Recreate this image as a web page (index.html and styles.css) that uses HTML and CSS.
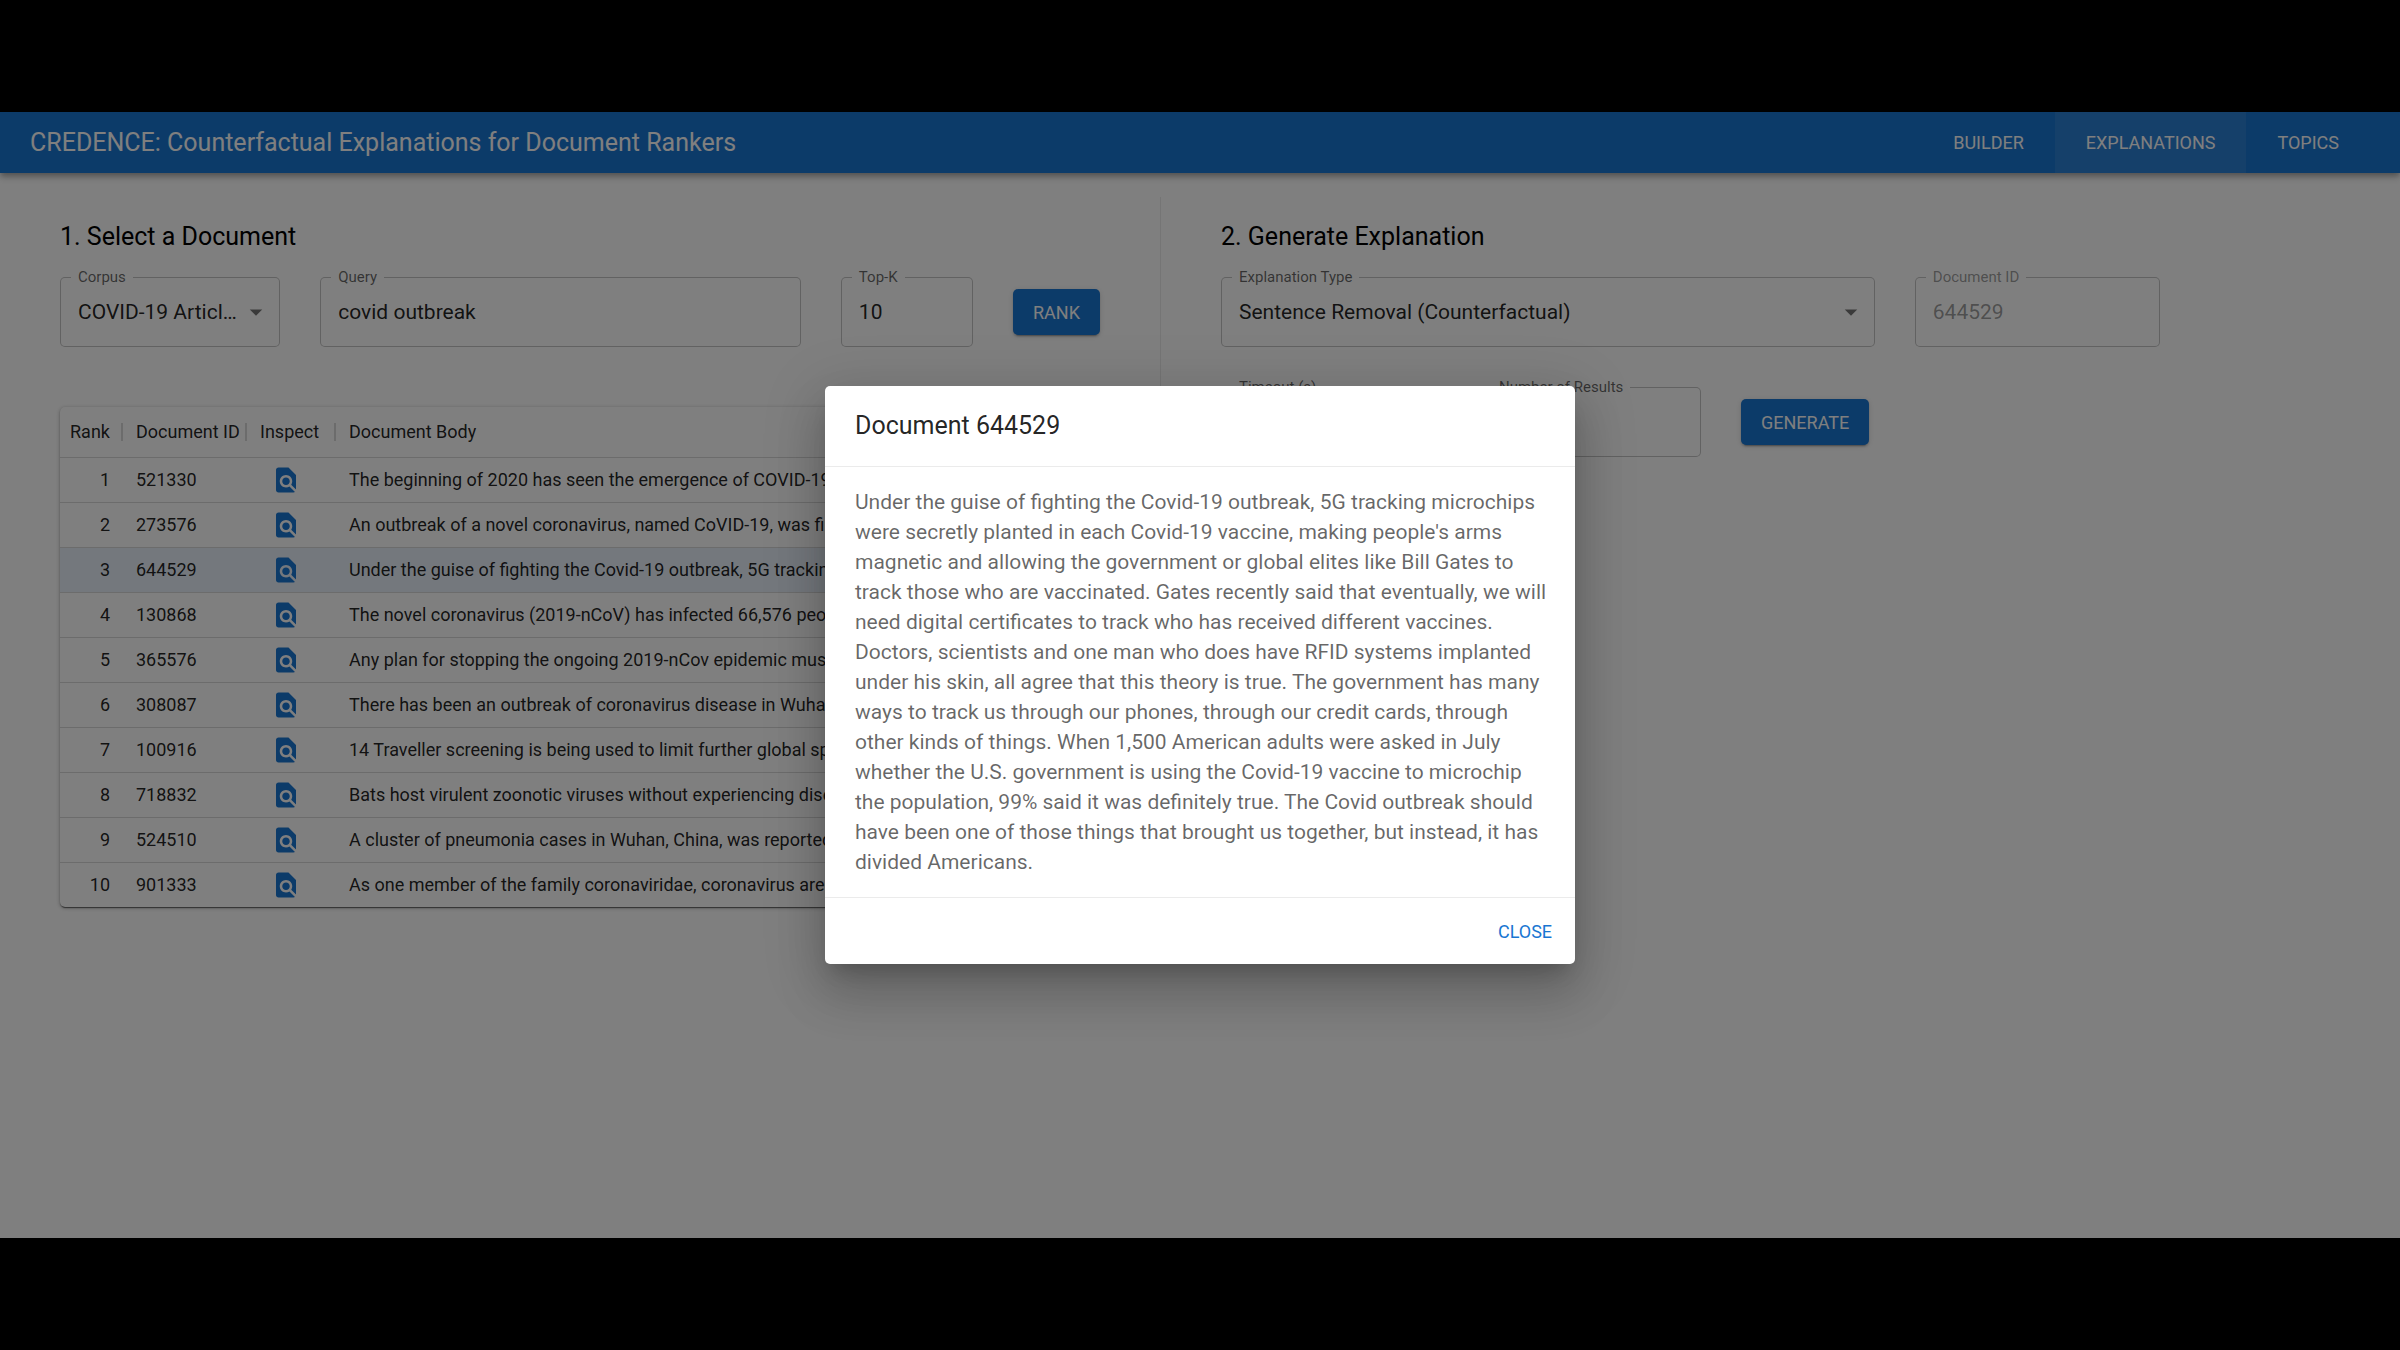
FILE: index.html
```html
<!DOCTYPE html>
<html lang="en">
<head>
  <meta charset="UTF-8" />
  <meta name="viewport" content="width=device-width, initial-scale=1.0" />
  <title>CREDENCE</title>
  <link rel="stylesheet" href="styles.css">
</head>
<body>
  <svg width="0" height="0" class="defs" aria-hidden="true">
    <symbol id="find" viewBox="0 0 24 24">
      <path d="M20 19.59V8l-6-6H6c-1.1 0-1.99.9-1.99 2L4 20c0 1.1.89 2 1.99 2H18c.45 0 .85-.15 1.19-.4l-4.43-4.43c-.8.52-1.74.83-2.76.83-2.76 0-5-2.24-5-5s2.24-5 5-5 5 2.24 5 5c0 1.02-.31 1.96-.83 2.75L20 19.59zM9 13c0 1.66 1.34 3 3 3s3-1.34 3-3-1.34-3-3-3-3 1.34-3 3z" />
    </symbol>
    <symbol id="arrow" viewBox="0 0 24 24">
      <path d="M7 10l5 5 5-5z" />
    </symbol>
  </svg>

  <div class="app">
    <header class="appbar">
      <h1>CREDENCE: Counterfactual Explanations for Document Rankers</h1>
      <nav>
        <a href="#builder">BUILDER</a>
        <a href="#explanations" class="active">EXPLANATIONS</a>
        <a href="#topics">TOPICS</a>
      </nav>
    </header>

    <main>
      <section class="panel">
        <h2>1. Select a Document</h2>
        <form class="row">
          <div class="field corpus">
            <label for="corpus">Corpus</label>
            <select id="corpus"><option>COVID-19 Articles</option></select>
            <svg class="arrow"><use href="#arrow" /></svg>
          </div>
          <div class="field query">
            <label for="query">Query</label>
            <input id="query" type="text" value="covid outbreak">
          </div>
          <div class="field topk">
            <label for="topk">Top-K</label>
            <input id="topk" type="text" value="10">
          </div>
          <button type="button" class="btn">RANK</button>
        </form>

        <div class="grid">
          <table>
            <thead>
              <tr>
                <th class="rank">Rank</th>
                <th class="docid">Document ID</th>
                <th class="inspect">Inspect</th>
                <th>Document Body</th>
              </tr>
            </thead>
            <tbody>
              <tr>
                <td class="rank">1</td>
                <td>521330</td>
                <td><button type="button" class="icon" aria-label="Inspect 521330"><svg><use href="#find" /></svg></button></td>
                <td>The beginning of 2020 has seen the emergence of COVID-19</td>
              </tr>
              <tr>
                <td class="rank">2</td>
                <td>273576</td>
                <td><button type="button" class="icon" aria-label="Inspect 273576"><svg><use href="#find" /></svg></button></td>
                <td>An outbreak of a novel coronavirus, named CoVID-19, was first</td>
              </tr>
              <tr class="selected">
                <td class="rank">3</td>
                <td>644529</td>
                <td><button type="button" class="icon" aria-label="Inspect 644529"><svg><use href="#find" /></svg></button></td>
                <td>Under the guise of fighting the Covid-19 outbreak, 5G tracking</td>
              </tr>
              <tr>
                <td class="rank">4</td>
                <td>130868</td>
                <td><button type="button" class="icon" aria-label="Inspect 130868"><svg><use href="#find" /></svg></button></td>
                <td>The novel coronavirus (2019-nCoV) has infected 66,576 people</td>
              </tr>
              <tr>
                <td class="rank">5</td>
                <td>365576</td>
                <td><button type="button" class="icon" aria-label="Inspect 365576"><svg><use href="#find" /></svg></button></td>
                <td>Any plan for stopping the ongoing 2019-nCov epidemic must</td>
              </tr>
              <tr>
                <td class="rank">6</td>
                <td>308087</td>
                <td><button type="button" class="icon" aria-label="Inspect 308087"><svg><use href="#find" /></svg></button></td>
                <td>There has been an outbreak of coronavirus disease in Wuhan</td>
              </tr>
              <tr>
                <td class="rank">7</td>
                <td>100916</td>
                <td><button type="button" class="icon" aria-label="Inspect 100916"><svg><use href="#find" /></svg></button></td>
                <td>14 Traveller screening is being used to limit further global spread</td>
              </tr>
              <tr>
                <td class="rank">8</td>
                <td>718832</td>
                <td><button type="button" class="icon" aria-label="Inspect 718832"><svg><use href="#find" /></svg></button></td>
                <td>Bats host virulent zoonotic viruses without experiencing disease</td>
              </tr>
              <tr>
                <td class="rank">9</td>
                <td>524510</td>
                <td><button type="button" class="icon" aria-label="Inspect 524510"><svg><use href="#find" /></svg></button></td>
                <td>A cluster of pneumonia cases in Wuhan, China, was reported</td>
              </tr>
              <tr>
                <td class="rank">10</td>
                <td>901333</td>
                <td><button type="button" class="icon" aria-label="Inspect 901333"><svg><use href="#find" /></svg></button></td>
                <td>As one member of the family coronaviridae, coronavirus are</td>
              </tr>
            </tbody>
          </table>
        </div>
      </section>

      <section class="panel explain">
        <h2>2. Generate Explanation</h2>
        <form>
          <div class="row">
            <div class="field type">
              <label for="type">Explanation Type</label>
              <select id="type"><option>Sentence Removal (Counterfactual)</option></select>
              <svg class="arrow"><use href="#arrow" /></svg>
            </div>
            <div class="field doc">
              <label for="doc">Document ID</label>
              <input id="doc" type="text" value="644529" disabled>
            </div>
          </div>
          <div class="row">
            <div class="field small">
              <label for="timeout">Timeout (s)</label>
              <input id="timeout" type="text">
            </div>
            <div class="field small">
              <label for="results">Number of Results</label>
              <input id="results" type="text">
            </div>
            <button type="button" class="btn">GENERATE</button>
          </div>
        </form>
      </section>
    </main>

    <div class="backdrop">
      <div class="dialog" role="dialog" aria-labelledby="dialog-title">
        <h2 id="dialog-title">Document 644529</h2>
        <p>Under the guise of fighting the Covid-19 outbreak, 5G tracking microchips were secretly planted in each Covid-19 vaccine, making people's arms magnetic and allowing the government or global elites like Bill Gates to track those who are vaccinated. Gates recently said that eventually, we will need digital certificates to track who has received different vaccines. Doctors, scientists and one man who does have RFID systems implanted under his skin, all agree that this theory is true. The government has many ways to track us through our phones, through our credit cards, through other kinds of things. When 1,500 American adults were asked in July whether the U.S. government is using the Covid-19 vaccine to microchip the population, 99% said it was definitely true. The Covid outbreak should have been one of those things that brought us together, but instead, it has divided Americans.</p>
        <div class="actions">
          <button type="button" class="close">CLOSE</button>
        </div>
      </div>
    </div>
  </div>
</body>
</html>
```
FILE: styles.css
```css
* {
  box-sizing: border-box;
}
body {
  margin: 0;
  min-height: 100vh;
  padding: 112px 0;
  display: flex;
  flex-direction: column;
  background: #000;
  color: rgba(0, 0, 0, 0.87);
  font-family: Roboto, "Liberation Sans", sans-serif;
  font-size: 21px;
}
h1, h2, p {
  margin: 0;
}
h1, h2 {
  font-size: 25px;
  line-height: 40px;
  font-weight: 400;
}
button, input, select {
  font-family: inherit;
  font-size: inherit;
  color: inherit;
}
.defs {
  position: absolute;
}
.app {
  position: relative;
  flex: 1;
  background: #fff;
}

/* top bar */
.appbar {
  display: flex;
  justify-content: space-between;
  align-items: center;
  height: 61px;
  padding: 0 30px;
  background: #1976d2;
  color: #fff;
  box-shadow: 0 3px 5px -1px rgba(0, 0, 0, 0.2), 0 5px 6px rgba(0, 0, 0, 0.14), 0 1px 12px rgba(0, 0, 0, 0.12);
}
nav {
  display: flex;
}
nav a {
  padding: 0 31px;
  line-height: 61px;
  font-size: 18px;
  color: inherit;
  text-decoration: none;
}
nav a.active {
  background: rgba(255, 255, 255, 0.08);
}

/* columns */
main {
  display: grid;
  grid-template-columns: 29fr 25fr 6fr;
  padding-top: 24px;
}
.panel {
  min-width: 0;
  padding: 20px 60px;
}
.explain {
  padding-right: 0;
  border-left: 1px solid rgba(0, 0, 0, 0.08);
}
.panel h2 {
  color: #000;
  margin-bottom: 20px;
}
.row {
  display: flex;
  align-items: center;
  gap: 40px;
  margin-bottom: 40px;
}

/* outlined fields */
.field {
  position: relative;
  min-width: 0;
}
.field label {
  position: absolute;
  top: -9px;
  left: 11px;
  padding: 0 7px;
  background: #fff;
  color: rgba(0, 0, 0, 0.6);
  font-size: 15px;
  line-height: 18px;
}
.field input,
.field select {
  display: block;
  width: 100%;
  height: 70px;
  padding: 0 17px;
  border: 1px solid rgba(0, 0, 0, 0.23);
  border-radius: 5px;
  background: #fff;
  appearance: none;
}
.field select {
  padding-right: 40px;
  text-overflow: ellipsis;
}
.field input:disabled {
  color: rgba(0, 0, 0, 0.4);
}
.doc label {
  color: rgba(0, 0, 0, 0.4);
}
.arrow {
  position: absolute;
  top: 20px;
  right: 9px;
  width: 30px;
  height: 30px;
  fill: rgba(0, 0, 0, 0.54);
  pointer-events: none;
}
.corpus {
  flex: 220;
}
.query {
  flex: 480;
}
.topk {
  flex: 132;
}
.type {
  flex: 8;
}
.doc {
  flex: 3;
}
.small {
  flex: 0 1 220px;
}
.btn {
  height: 46px;
  padding: 0 20px;
  border: 0;
  border-radius: 5px;
  background: #1976d2;
  color: #fff;
  font-size: 18px;
  box-shadow: 0 4px 1px -3px rgba(0, 0, 0, 0.2), 0 2px 2px rgba(0, 0, 0, 0.14), 0 1px 6px rgba(0, 0, 0, 0.12);
}

/* ranking table */
.grid {
  margin-top: 60px;
  border-radius: 5px;
  box-shadow: 0 3px 1px -2px rgba(0, 0, 0, 0.3), 0 1px 1px rgba(0, 0, 0, 0.3), 0 1px 4px rgba(0, 0, 0, 0.3);
}
table {
  width: 100%;
  table-layout: fixed;
  border-collapse: collapse;
  font-size: 18px;
}
th, td {
  height: 45px;
  padding: 0 13px;
  border-bottom: 1px solid rgba(0, 0, 0, 0.15);
  text-align: left;
  white-space: nowrap;
  overflow: hidden;
  text-overflow: ellipsis;
}
tr:last-child td {
  border-bottom: 0;
}
th {
  height: 50px;
  font-weight: 400;
  background: linear-gradient(rgba(0, 0, 0, 0.15), rgba(0, 0, 0, 0.15)) right center / 2px 18px no-repeat;
}
th:last-child {
  background: none;
}
th.rank {
  width: 63px;
  padding: 0 10px;
}
th.docid {
  width: 124px;
  padding-right: 5px;
}
th.inspect {
  width: 89px;
}
td.rank {
  text-align: right;
}
.selected {
  background: rgba(25, 118, 210, 0.1);
}
.icon {
  display: block;
  margin-left: 11px;
  padding: 0;
  border: 0;
  background: none;
}
.icon svg {
  display: block;
  width: 30px;
  height: 30px;
  fill: #1976d2;
}

/* document dialog */
.backdrop {
  position: absolute;
  inset: 0;
  display: flex;
  align-items: center;
  justify-content: center;
  background: rgba(0, 0, 0, 0.5);
}
.dialog {
  width: 750px;
  border-radius: 5px;
  background: #fff;
  box-shadow: 0 14px 19px -9px rgba(0, 0, 0, 0.2), 0 30px 48px 4px rgba(0, 0, 0, 0.14), 0 11px 58px 10px rgba(0, 0, 0, 0.12);
}
.dialog h2 {
  padding: 20px 30px;
}
.dialog p {
  padding: 20px 20px 20px 30px;
  border-top: 1px solid rgba(0, 0, 0, 0.08);
  border-bottom: 1px solid rgba(0, 0, 0, 0.08);
  color: rgba(0, 0, 0, 0.6);
  line-height: 30px;
}
.actions {
  display: flex;
  justify-content: flex-end;
  padding: 10px;
}
.close {
  min-width: 80px;
  height: 46px;
  border: 0;
  background: none;
  color: #1976d2;
  font-size: 18px;
}
```
